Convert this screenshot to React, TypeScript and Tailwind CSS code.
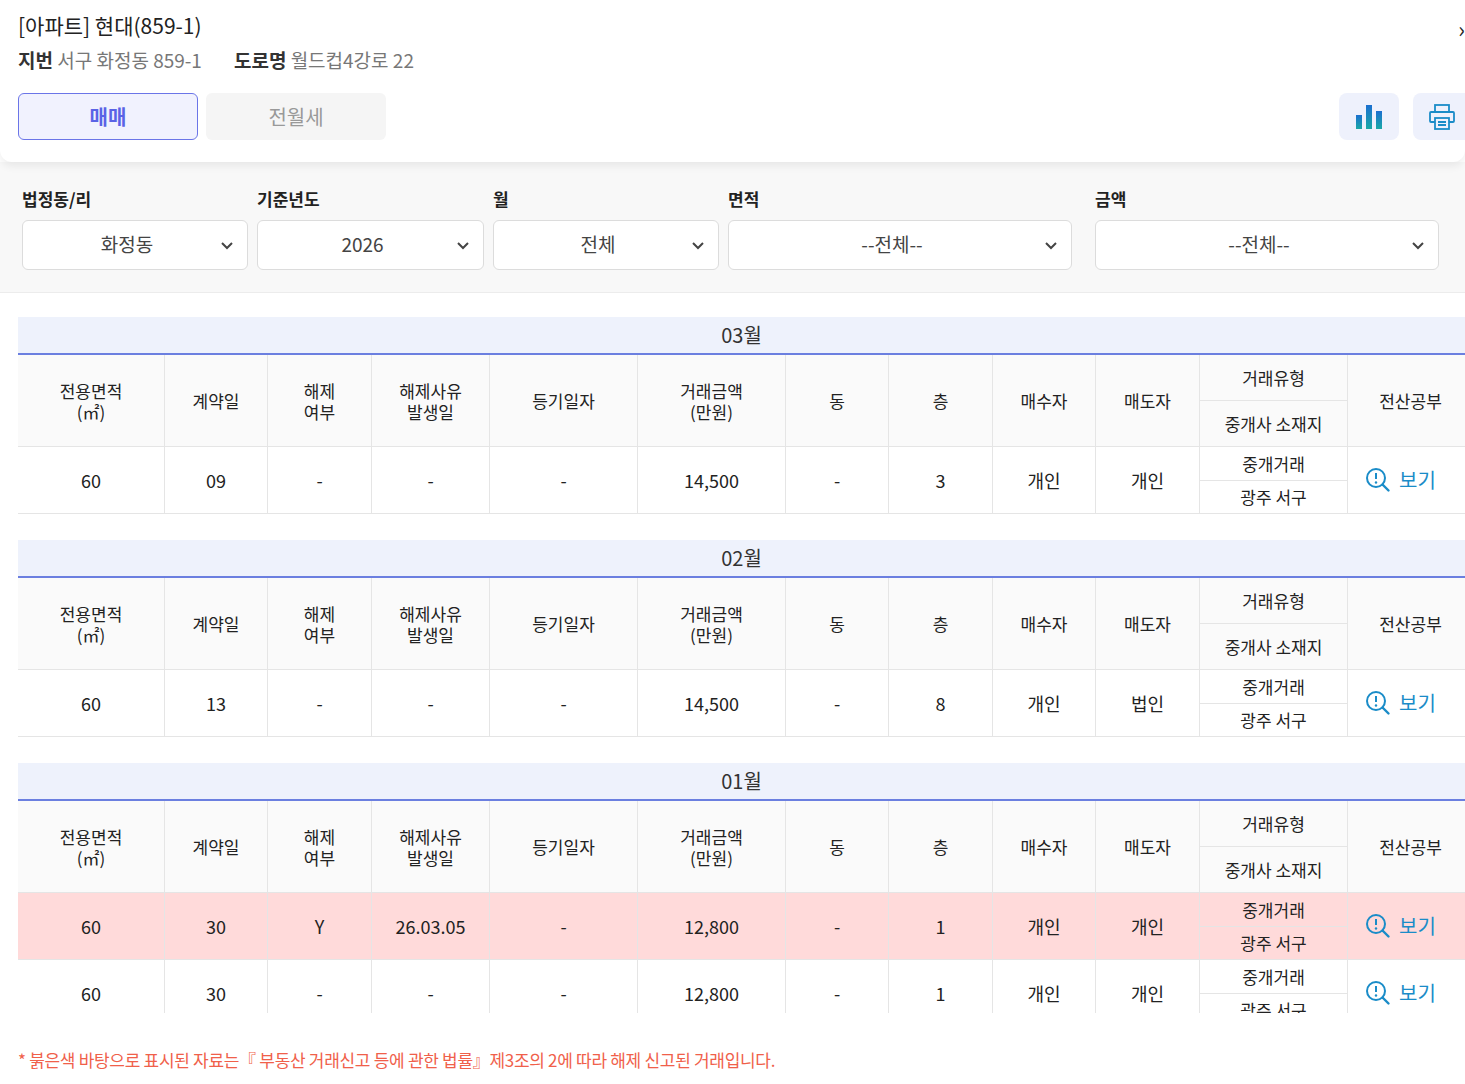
import React from "react"

const F = { fontFamily: '"Noto Sans CJK KR", "Noto Sans", sans-serif' }
const cols = "grid grid-cols-[147px_103px_104px_118px_148px_148px_103px_104px_103px_104px_148px_1fr]"

type Row = { area: string; day: string; cancel: string; cdate: string; reg: string; price: string; dong: string; floor: string; buyer: string; seller: string; red?: boolean }

const months: { m: string; rows: Row[] }[] = [
  { m: "03월", rows: [{ area: "60", day: "09", cancel: "-", cdate: "-", reg: "-", price: "14,500", dong: "-", floor: "3", buyer: "개인", seller: "개인" }] },
  { m: "02월", rows: [{ area: "60", day: "13", cancel: "-", cdate: "-", reg: "-", price: "14,500", dong: "-", floor: "8", buyer: "개인", seller: "법인" }] },
  {
    m: "01월",
    rows: [
      { area: "60", day: "30", cancel: "Y", cdate: "26.03.05", reg: "-", price: "12,800", dong: "-", floor: "1", buyer: "개인", seller: "개인", red: true },
      { area: "60", day: "30", cancel: "-", cdate: "-", reg: "-", price: "12,800", dong: "-", floor: "1", buyer: "개인", seller: "개인" },
    ],
  },
]

function Chevron() {
  return (
    <svg width="16" height="16" viewBox="0 0 16 16" className="absolute right-3 top-1/2 -translate-y-1/2">
      <path d="M3 6l5 5 5-5" fill="none" stroke="#444" strokeWidth="2" />
    </svg>
  )
}

function Select({ label, value, w }: { label: string; value: string; w: string }) {
  return (
    <div className={`${w} flex flex-col gap-2`}>
      <div className="text-[17px] font-bold text-[#222]">{label}</div>
      <div className="relative h-[50px] bg-white border border-[#dcdcdc] rounded-md flex items-center justify-center text-[19px] text-[#444] pr-4">
        {value}
        <Chevron />
      </div>
    </div>
  )
}

function ViewIcon() {
  return (
    <svg width="26" height="26" viewBox="0 0 26 26">
      <circle cx="11" cy="11" r="9" fill="none" stroke="#1a8cc8" strokeWidth="2" />
      <path d="M17.5 17.5l6 6" stroke="#1a8cc8" strokeWidth="2.4" strokeLinecap="round" />
      <path d="M11 6v6" stroke="#1a8cc8" strokeWidth="2" />
      <circle cx="11" cy="15.5" r="1.2" fill="#1a8cc8" />
    </svg>
  )
}

const cell = "flex items-center justify-center text-center border-r border-[#e5e5e5]"

function Month({ m, rows }: { m: string; rows: Row[] }) {
  return (
    <div className="mb-[26px]">
      <div className="h-[38px] bg-[#eef2fc] border-b-2 border-[#6b7fe0] flex items-center justify-center text-[20px] text-[#333]">{m}</div>
      <div className={`${cols} h-[92px] bg-[#fafafa] border-b border-[#e5e5e5] text-[17px] text-[#222] leading-[21px]`}>
        <div className={cell}>전용면적<br />(㎡)</div>
        <div className={cell}>계약일</div>
        <div className={cell}>해제<br />여부</div>
        <div className={cell}>해제사유<br />발생일</div>
        <div className={cell}>등기일자</div>
        <div className={cell}>거래금액<br />(만원)</div>
        <div className={cell}>동</div>
        <div className={cell}>층</div>
        <div className={cell}>매수자</div>
        <div className={cell}>매도자</div>
        <div className="flex flex-col border-r border-[#e5e5e5]">
          <div className="flex-1 flex items-center justify-center border-b border-[#e5e5e5]">거래유형</div>
          <div className="flex-1 flex items-center justify-center">중개사 소재지</div>
        </div>
        <div className="flex items-center justify-center pl-2">전산공부</div>
      </div>
      {rows.map((r, i) => (
        <div key={i} className={`${cols} h-[67px] border-b border-[#e5e5e5] text-[18px] text-[#222] ${r.red ? "bg-[#ffdada]" : "bg-white"}`}>
          <div className={cell}>{r.area}</div>
          <div className={cell}>{r.day}</div>
          <div className={cell}>{r.cancel}</div>
          <div className={cell}>{r.cdate}</div>
          <div className={cell}>{r.reg}</div>
          <div className={cell}>{r.price}</div>
          <div className={cell}>{r.dong}</div>
          <div className={cell}>{r.floor}</div>
          <div className={cell}>{r.buyer}</div>
          <div className={cell}>{r.seller}</div>
          <div className="flex flex-col border-r border-[#e5e5e5] text-[17px]">
            <div className="flex-1 flex items-center justify-center border-b border-[#e5e5e5]">중개거래</div>
            <div className="flex-1 flex items-center justify-center">광주 서구</div>
          </div>
          <div className="flex items-center justify-center gap-2 pr-3 text-[20px] text-[#1a8cc8]">
            <ViewIcon />
            보기
          </div>
        </div>
      ))}
    </div>
  )
}

export default function App() {
  return (
    <div className="w-[1465px] h-[1084px] overflow-hidden bg-white relative" style={F}>
      <div className="relative z-10 bg-white h-[162px] rounded-b-xl shadow-[0_4px_8px_rgba(0,0,0,0.07)] pl-[18px] pt-[10px]">
        <div className="text-[21px] text-[#222]">[아파트] 현대(859-1)</div>
        <div className="flex gap-8 text-[19px] text-[#777] mt-1">
          <span><b className="text-[#333]">지번</b> 서구 화정동 859-1</span>
          <span><b className="text-[#333]">도로명</b> 월드컵4강로 22</span>
        </div>
        <div className="flex mt-[19px] items-center">
          <div className="w-[180px] h-[47px] rounded-md border border-[#6b75e8] bg-[#f1f2fe] flex items-center justify-center text-[20px] text-[#5a63e6] font-bold">매매</div>
          <div className="w-[180px] h-[47px] ml-[8px] rounded-md bg-[#f5f5f5] flex items-center justify-center text-[20px] text-[#999]">전월세</div>
          <div className="ml-auto flex gap-[14px]">
            <div className="w-[60px] h-[47px] rounded-lg bg-[#eef1fc] flex items-center justify-center">
              <svg width="28" height="28" viewBox="0 0 28 28">
                <defs>
                  <linearGradient id="g" x1="0" y1="0" x2="0" y2="1">
                    <stop offset="0" stopColor="#1b6fd0" />
                    <stop offset="1" stopColor="#1aa9a6" />
                  </linearGradient>
                </defs>
                <rect x="1" y="12" width="6" height="14" fill="url(#g)" />
                <rect x="11" y="2" width="6" height="24" fill="url(#g)" />
                <rect x="21" y="8" width="6" height="18" fill="url(#g)" />
              </svg>
            </div>
            <div className="w-[52px] h-[47px] rounded-l-lg bg-[#eef1fc] flex items-center pl-[15px]">
              <svg width="28" height="28" viewBox="0 0 28 28" fill="none" stroke="#1a8cc8" strokeWidth="1.8">
                <rect x="7" y="2" width="14" height="7" />
                <rect x="2" y="9" width="24" height="10" rx="1" />
                <rect x="7" y="15" width="14" height="11" fill="#eef1fc" />
                <path d="M10 19h8M10 22h8" />
              </svg>
            </div>
          </div>
        </div>
        <div className="absolute right-[0px] top-[12px] text-[22px] text-[#222]">›</div>
      </div>
      <div className="bg-[#f8f8f8] h-[131px] flex gap-[9px] pl-[22px] pt-[24px] border-b border-[#ececec]">
        <Select label="법정동/리" value="화정동" w="w-[226px]" />
        <Select label="기준년도" value="2026" w="w-[227px]" />
        <Select label="월" value="전체" w="w-[226px]" />
        <Select label="면적" value="--전체--" w="w-[344px]" />
        <div className="w-[5px]" />
        <Select label="금액" value="--전체--" w="w-[344px]" />
      </div>
      <div className="h-[720px] overflow-hidden pl-[18px] pt-[24px]">
        {months.map((mo) => (
          <Month key={mo.m} {...mo} />
        ))}
      </div>
      <div className="pl-[18px] pt-[34px] text-[17px] text-[#f0604a] tracking-[-0.3px]">
        * 붉은색 바탕으로 표시된 자료는『 부동산 거래신고 등에 관한 법률』제3조의 2에 따라 해제 신고된 거래입니다.
      </div>
    </div>
  )
}
